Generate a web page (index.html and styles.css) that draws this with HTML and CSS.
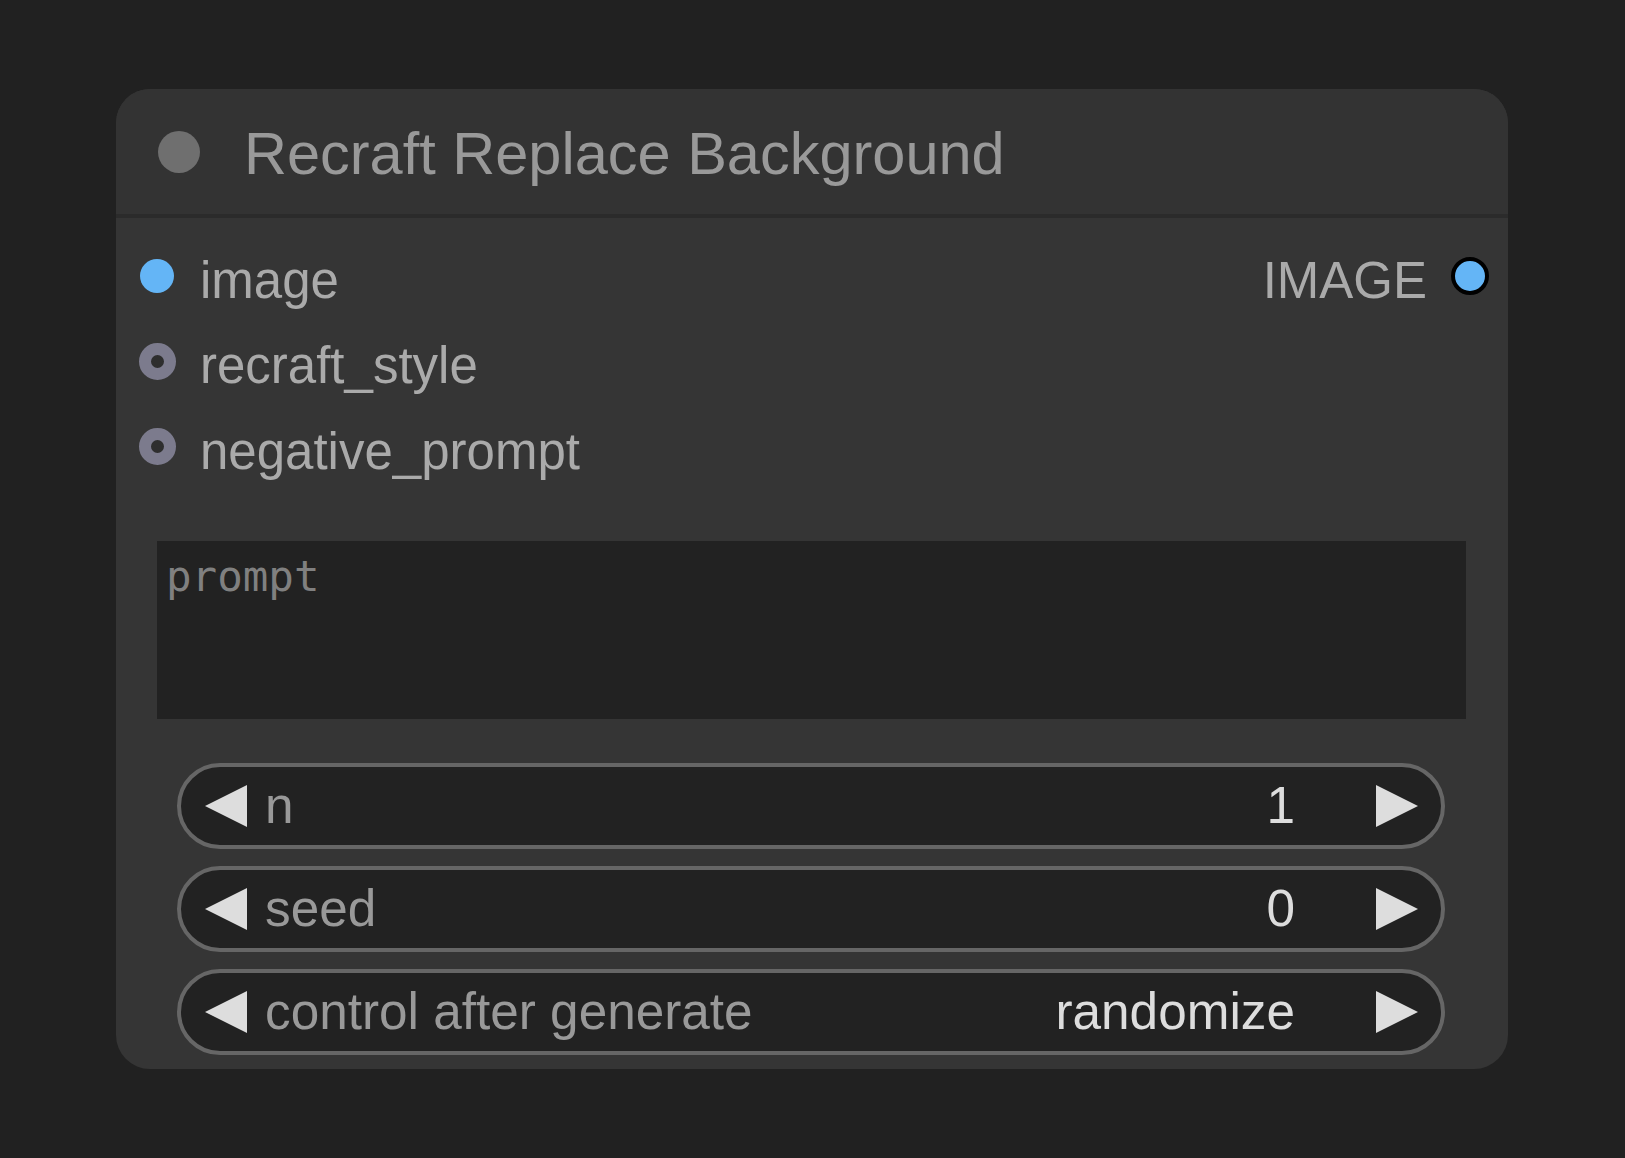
FILE: index.html
```html
<!DOCTYPE html>
<html lang="en">
<head>
<meta charset="utf-8">
<title>Recraft Replace Background</title>
<link rel="stylesheet" href="styles.css">
</head>
<body>
<div class="canvas">
  <div class="node">
    <div class="node-header">
      <span class="title-dot"></span>
      <span class="title">Recraft Replace Background</span>
    </div>
    <div class="node-body">
      <div class="slots">
        <div class="inputs">
          <div class="slot"><span class="dot dot-image"></span><span class="slot-label">image</span></div>
          <div class="slot"><span class="dot dot-optional"></span><span class="slot-label">recraft_style</span></div>
          <div class="slot"><span class="dot dot-optional"></span><span class="slot-label">negative_prompt</span></div>
        </div>
        <div class="outputs">
          <div class="slot slot-out"><span class="slot-label">IMAGE</span><span class="dot dot-output"></span></div>
        </div>
      </div>
      <div class="prompt">prompt</div>
      <div class="widgets">
        <div class="widget">
          <svg class="arrow" viewBox="0 0 42 42"><polygon points="42,0 42,42 0,21"/></svg>
          <span class="w-label">n</span>
          <span class="w-value">1</span>
          <svg class="arrow" viewBox="0 0 42 42"><polygon points="0,0 0,42 42,21"/></svg>
        </div>
        <div class="widget">
          <svg class="arrow" viewBox="0 0 42 42"><polygon points="42,0 42,42 0,21"/></svg>
          <span class="w-label">seed</span>
          <span class="w-value">0</span>
          <svg class="arrow" viewBox="0 0 42 42"><polygon points="0,0 0,42 42,21"/></svg>
        </div>
        <div class="widget">
          <svg class="arrow" viewBox="0 0 42 42"><polygon points="42,0 42,42 0,21"/></svg>
          <span class="w-label">control after generate</span>
          <span class="w-value">randomize</span>
          <svg class="arrow" viewBox="0 0 42 42"><polygon points="0,0 0,42 42,21"/></svg>
        </div>
      </div>
    </div>
  </div>
</div>
</body>
</html>
```

FILE: styles.css
```css
html, body {
  margin: 0;
  padding: 0;
  background: #212121;
}

body {
  width: 1625px;
  height: 1158px;
  overflow: hidden;
  font-family: "Liberation Sans", Arial, sans-serif;
}

.canvas {
  padding: 89px 0 0 116px;
}

.node {
  width: 1392px;
  background: #353535;
  border-radius: 34px;
  overflow: hidden;
}

.node-header {
  height: 125px;
  background: #333333;
  border-bottom: 4px solid #2b2b2b;
  display: flex;
  align-items: center;
  padding-left: 42px;
  gap: 44px;
}

.title-dot {
  width: 42px;
  height: 42px;
  border-radius: 50%;
  background: #6f6f6f;
  flex: none;
}

.title {
  font-size: 59.5px;
  color: #999999;
  padding-top: 3px;
  white-space: nowrap;
}

.node-body {
  padding: 15px 0 14px 0;
}

.slots {
  display: flex;
  justify-content: space-between;
}

.inputs {
  padding-left: 24px;
}

.outputs {
  padding-right: 19px;
}

.slot {
  height: 85.5px;
  display: flex;
  align-items: center;
}

.slot-label {
  font-size: 51px;
  color: #aaaaaa;
  padding-top: 9px;
  white-space: nowrap;
}

.dot {
  flex: none;
  border-radius: 50%;
  box-sizing: border-box;
}

.dot-image {
  width: 34px;
  height: 34px;
  background: #64b5f6;
  margin-right: 26px;
}

.dot-optional {
  width: 37px;
  height: 37px;
  margin-left: -1px;
  margin-right: 24px;
  border: 12.5px solid #7c7b8d;
  background: #2e2e2e;
}

.slot-out .slot-label {
  margin-right: 24px;
}

.dot-output {
  width: 38px;
  height: 38px;
  background: #64b5f6;
  border: 4px solid #000000;
}

.prompt {
  margin: 51px 42px 0 41px;
  height: 178px;
  box-sizing: border-box;
  background: #222222;
  padding: 11px 9px;
  font-family: "DejaVu Sans Mono", "Liberation Mono", monospace;
  font-size: 42.5px;
  color: #808080;
}

.widgets {
  margin: 44px 63px 0 61px;
  display: flex;
  flex-direction: column;
  gap: 17px;
}

.widget {
  height: 86px;
  box-sizing: border-box;
  border: 4px solid #666666;
  border-radius: 43px;
  background: #222222;
  display: flex;
  align-items: center;
  padding: 0 23px 0 24px;
  font-size: 51.3px;
  white-space: nowrap;
}

.arrow {
  width: 42px;
  height: 42px;
  flex: none;
  fill: #dddddd;
}

.w-label {
  flex: 1;
  margin-left: 18px;
  color: #999999;
}

.w-value {
  color: #dddddd;
  margin-right: 81px;
}
```
